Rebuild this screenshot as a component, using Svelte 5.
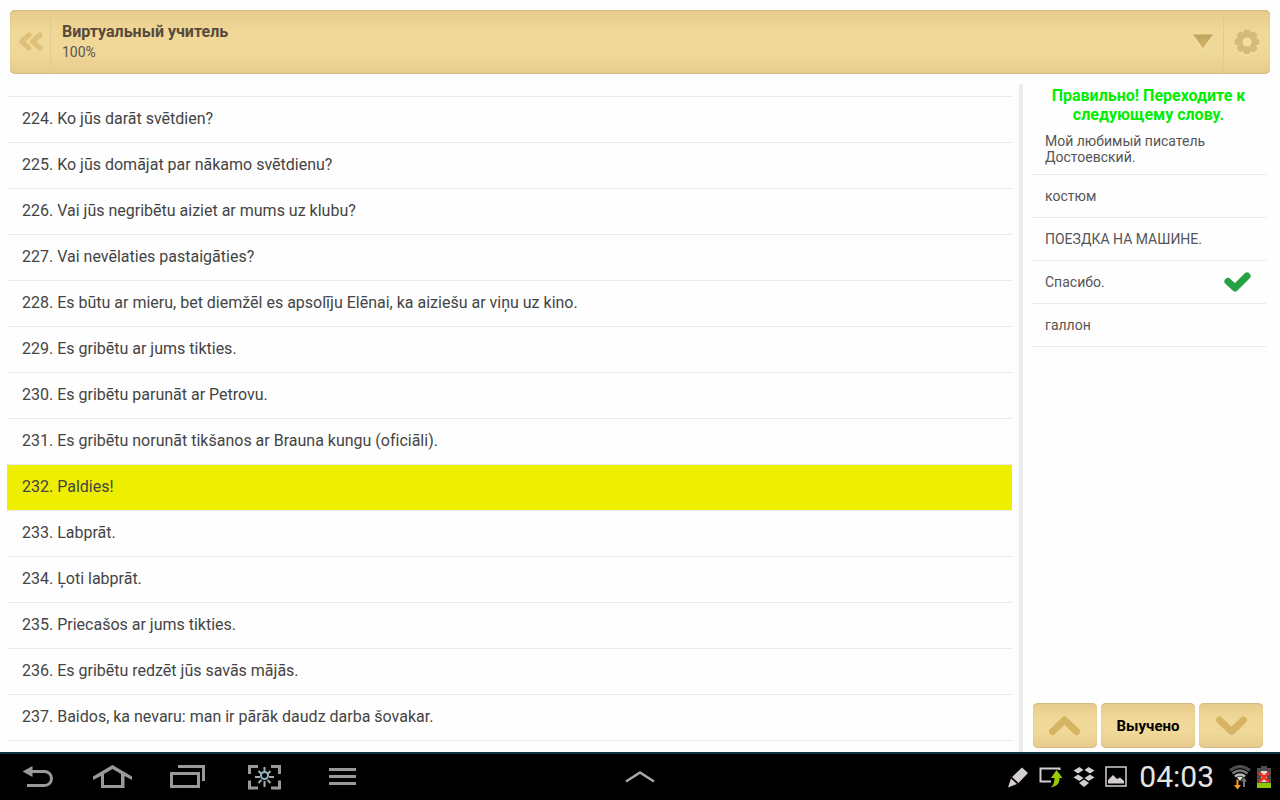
<script>
  const phrases = [
    [224, 'Ko jūs darāt svētdien?'],
    [225, 'Ko jūs domājat par nākamo svētdienu?'],
    [226, 'Vai jūs negribētu aiziet ar mums uz klubu?'],
    [227, 'Vai nevēlaties pastaigāties?'],
    [228, 'Es būtu ar mieru, bet diemžēl es apsolīju Elēnai, ka aiziešu ar viņu uz kino.'],
    [229, 'Es gribētu ar jums tikties.'],
    [230, 'Es gribētu parunāt ar Petrovu.'],
    [231, 'Es gribētu norunāt tikšanos ar Brauna kungu (oficiāli).'],
    [232, 'Paldies!'],
    [233, 'Labprāt.'],
    [234, 'Ļoti labprāt.'],
    [235, 'Priecašos ar jums tikties.'],
    [236, 'Es gribētu redzēt jūs savās mājās.'],
    [237, 'Baidos, ka nevaru: man ir pārāk daudz darba šovakar.']
  ];
  const answers = [
    'Мой любимый писатель Достоевский.',
    'костюм',
    'ПОЕЗДКА НА МАШИНЕ.',
    'Спасибо.',
    'галлон'
  ];
  const correct = 3;
  const petals = [0, 45, 90, 135, 180, 225, 270, 315];
  let current = $state(232);
</script>

<div class="screen">
  <header class="gold">
    <button class="back" aria-label="Назад">
      <svg width="26" height="22" viewBox="0 0 26 22" fill="none" stroke-width="5" stroke-linecap="round" stroke-linejoin="round">
        <path d="M12 4 4.500 10.500 12 17M23 4 15.500 10.500 23 17" stroke="#dfc078" />
      </svg>
    </button>
    <div class="title">
      <h1>Виртуальный учитель</h1>
      <p>100%</p>
    </div>
    <button class="drop" aria-label="Выбрать урок">
      <svg width="22" height="18" viewBox="0 0 22 18">
        <defs>
          <linearGradient id="tri" x1="0" y1="0" x2="0" y2="1">
            <stop offset="0" stop-color="#c2a35c" />
            <stop offset="1" stop-color="#d3b56c" />
          </linearGradient>
        </defs>
        <path d="M1 3h20L11 17.500z" fill="#f7e3b0" />
        <path d="M1 1.500h20L11 15.500z" fill="url(#tri)" />
      </svg>
    </button>
    <button class="gear" aria-label="Настройки">
      <svg width="28" height="28" viewBox="-14 -14 28 28">
        <g fill="#f7e3b0" transform="translate(0 1)">
          {#each petals as a}<circle cx="0" cy="-9" r="3.800" transform="rotate({a})" />{/each}
        </g>
        <g fill="#d8ba78">
          {#each petals as a}<circle cx="0" cy="-8.800" r="3.800" transform="rotate({a})" />{/each}
          <circle r="9" />
        </g>
        <circle r="4.500" fill="#f3dda2" />
      </svg>
    </button>
  </header>

  <main>
    <ol class="phrases">
      {#each phrases as [n, text]}
        <li class:active={n === current}>
          <button onclick={() => (current = n)}>{n}. {text}</button>
        </li>
      {/each}
    </ol>

    <aside>
      <p class="verdict">Правильно! Переходите к следующему слову.</p>
      <ul class="answers">
        {#each answers as answer, i}
          <li>
            <button>
              <span>{answer}</span>
              {#if i === correct}
                <svg width="28" height="22" viewBox="0 0 28 22" fill="none" stroke="#27a243" stroke-width="7" stroke-linecap="round" stroke-linejoin="round">
                  <path d="M4 10.500 11 17 23 5" />
                </svg>
              {/if}
            </button>
          </li>
        {/each}
      </ul>
      <div class="actions">
        <button class="gold" aria-label="Предыдущее слово">
          <svg width="34" height="22" viewBox="0 0 34 22" fill="none" stroke="#d6b463" stroke-width="7" stroke-linecap="round" stroke-linejoin="round">
            <path d="M4.500 16.500 16.500 5 28.500 16.500" />
          </svg>
        </button>
        <button class="gold learned">Выучено</button>
        <button class="gold" aria-label="Следующее слово">
          <svg width="34" height="22" viewBox="0 0 34 22" fill="none" stroke="#d6b463" stroke-width="7" stroke-linecap="round" stroke-linejoin="round">
            <path d="M5.500 5 17.500 16.500 29.500 5" />
          </svg>
        </button>
      </div>
    </aside>
  </main>

  <nav>
    <div class="keys">
      <button aria-label="Назад">
        <svg width="33" height="24" viewBox="0 0 33 24">
          <path d="M8 6.500h14.500a7 7 0 0 1 0 14H5" fill="none" stroke="#999" stroke-width="3" />
          <path d="M.5 6.500 10.500 1v11z" fill="#999" />
        </svg>
      </button>
      <button aria-label="Домой">
        <svg width="39" height="24" viewBox="0 0 39 24">
          <path d="M0 11.500 19.500 0 39 11.500V15L31.500 11v12H8V11L0 15zM11 9v11h17V9l-8.500-5z" fill="#999" fill-rule="evenodd" />
        </svg>
      </button>
      <button aria-label="Недавние">
        <svg width="35" height="24" viewBox="0 0 35 24" fill="none" stroke="#999" stroke-width="3">
          <path d="M1.500 8.500h27v13h-27zM8 1.500h25.500V16" />
        </svg>
      </button>
      <button aria-label="Снимок экрана">
        <svg width="43" height="26" viewBox="0 0 43 26" fill="none">
          <path d="M6.500 10V2.500H15M28 2.500h8.500V10M36.500 16.500V24H28M15 24H6.500v-7.500" stroke="#999" stroke-width="3" />
          <path d="M21.500 3v4M21.500 17v6M12 13h5M26 13h5M15.500 7l3 3M27.500 7l-3 3M15.500 19l3-3M27.500 19l-3-3" stroke="#aaa" stroke-width="2" />
          <circle cx="21.500" cy="11.500" r="3.500" stroke="#8fb6c4" stroke-width="2" fill="#000" />
        </svg>
      </button>
      <button aria-label="Меню">
        <svg width="37" height="24" viewBox="0 0 37 24" fill="#999">
          <path d="M5 3h27v3H5zM5 10h27v3H5zM5 17h27v3H5z" />
        </svg>
      </button>
    </div>

    <button aria-label="Развернуть">
      <svg width="32" height="16" viewBox="0 0 32 16" fill="none" stroke="#aaa" stroke-width="2.500">
        <path d="M2 12.500 16 3.500 30 12.500" />
      </svg>
    </button>

    <div class="status">
      <svg width="22" height="22" viewBox="0 0 22 22" fill="#d2ced2">
        <path d="M15 1.500 21 7 11.500 17 5 11zM4 12.500 10 18 1 21.500z" />
      </svg>
      <svg width="24" height="24" viewBox="0 0 24 24">
        <path d="M20.500 5V3.500H1.500v13H12" fill="none" stroke="#d2ced2" stroke-width="2" />
        <path d="M17.500 5 23.500 13H20.500C20.500 18.500 18 21.500 11.500 22.500c3-2 4-5 4-9.500h-3.500z" fill="#99cc00" />
      </svg>
      <svg width="22" height="22" viewBox="0 0 22 22" fill="#d2ced2">
        <path d="M6.500 1 10.500 4 5 7.500 .5 4.500zM15.500 1 21.500 4.500 17 7.500 11.500 4zM11 5l4.500 3.500L11 12 6.500 8.500z" fill-opacity="0" />
        <path d="M6.500 1 10.500 4 5 7.500 .5 4.500zM15.500 1 21.500 4.500 17 7.500 11.500 4zM.5 11.500 5 8.500 10.500 12 6.500 15zM21.500 11.500 17 8.500 11.500 12 15.500 15zM11 13.500l5 3.500-5 4-5-4z" />
      </svg>
      <svg width="22" height="22" viewBox="0 0 22 22">
        <path d="M1 1h20v19H1z" fill="none" stroke="#d2ced2" stroke-width="1.500" />
        <path d="M3 17.500V14l5-5 4 4 3-1.500 4 3.500v2.500z" fill="#d2ced2" />
      </svg>
      <time>04:03</time>
      <div class="signal">
        <svg width="22" height="26" viewBox="0 0 22 26" fill="none">
          <path d="M1 6.500q10-8 20 0" stroke="#4c4c4c" stroke-width="3" />
          <path d="M3.500 9.500q7.500-6 15 0" stroke="#777" stroke-width="2.500" />
          <path d="M6 12.500q5-4 10 0" stroke="#bbb" stroke-width="2.500" />
          <path d="M11 17 8 13.500q3-2 6 0z" fill="#ddd" />
          <path d="M7.500 15.500h2V21h2.500l-3.500 4.500L5 21h2.500z" fill="#ff9a22" />
          <path d="M14 23v-5.500h-2l3-4 3 4h-2V23z" fill="#777" />
        </svg>
        <svg width="14" height="22" viewBox="0 0 14 22">
          <path d="M4 0h6v2h4v20H0V2h4z" fill="#4c4c4c" />
          <path d="M4 5h6v11H4z" fill="#ddd" />
          <path d="M0 17h14v5H0z" fill="#8fc800" />
          <path d="M2 6.500 12 16M12 6.500 2 16" stroke="#f0301c" stroke-width="3" />
        </svg>
      </div>
    </div>
  </nav>
</div>

<style>
  :global(body) {
    margin: 0;
    background: #fefefe;
  }
  .screen {
    display: flex;
    flex-direction: column;
    height: 100vh;
    font-family: Roboto, "Noto Sans", sans-serif;
    font-variant-ligatures: none;
    color: #444;
  }
  button {
    display: flex;
    align-items: center;
    justify-content: center;
    margin: 0;
    padding: 0;
    border: 0;
    background: none;
    font: inherit;
    color: inherit;
    cursor: pointer;
  }
  svg {
    display: block;
    flex: none;
  }
  .gold {
    border-radius: 5px;
    background: linear-gradient(#e7cb8c, #f0d898 35%, #f0d898 65%, #e6cc8e);
    box-shadow: inset 0 1px 1px #d3b982, inset 0 -1px 1px #d3b982;
  }
  header {
    display: flex;
    flex: none;
    height: 64px;
    margin: 10px;
  }
  .back {
    width: 41px;
    border-right: 1px solid #e3ca8c;
  }
  .title {
    flex: 1;
    padding: 12px 11px;
  }
  h1,
  p {
    margin: 0;
  }
  h1 {
    font-size: 16px;
    line-height: 20px;
    font-weight: 700;
    color: #574a3c;
  }
  .title p {
    font-size: 14px;
    line-height: 20px;
    color: #5a5550;
  }
  .drop {
    width: 40px;
  }
  .gear {
    width: 47px;
    border-left: 1px solid #e3ca8c;
  }
  main {
    display: flex;
    flex: 1;
    min-height: 0;
  }
  ol,
  ul {
    margin: 0;
    padding: 0;
    list-style: none;
  }
  .phrases {
    flex: 1;
    min-width: 0;
    padding: 12px 7px 0;
    overflow: hidden;
  }
  .phrases li {
    border-bottom: 1px solid #e9e9e9;
  }
  .phrases li:first-child {
    border-top: 1px solid #e9e9e9;
  }
  .phrases button {
    justify-content: flex-start;
    width: 100%;
    min-height: 45px;
    padding: 0 15px 2px;
    font-size: 16px;
    line-height: 20px;
    text-align: left;
  }
  .active {
    background: #eeee00;
  }
  aside {
    display: flex;
    flex-direction: column;
    box-sizing: border-box;
    width: 261px;
    padding: 2px 14px 4px 8px;
    border-left: 4px solid #ebebeb;
  }
  .verdict {
    padding: 0 8px;
    font-size: 16px;
    line-height: 19px;
    font-weight: 700;
    text-align: center;
    color: #00ee00;
  }
  .answers {
    flex: 1;
  }
  .answers li {
    border-bottom: 1px solid #e9e9e9;
  }
  .answers button {
    justify-content: space-between;
    width: 100%;
    min-height: 42px;
    padding: 0 14px;
    font-size: 14px;
    line-height: 16px;
    text-align: left;
    color: #555;
  }
  .answers li:first-child button {
    min-height: 50px;
  }
  .actions {
    display: flex;
    gap: 4px;
    padding: 0 3px 0 2px;
  }
  .actions button {
    width: 64px;
    height: 45px;
  }
  .actions .learned {
    flex: 1;
    font-size: 15px;
    font-weight: 700;
    color: #000;
  }
  nav {
    display: grid;
    grid-template-columns: 1fr auto 1fr;
    align-items: center;
    box-sizing: border-box;
    height: 48px;
    border-top: 2px solid #0a3342;
    background: #000;
  }
  .keys {
    display: flex;
    align-items: center;
    gap: 38px;
    padding-left: 22px;
  }
  .status {
    display: flex;
    align-items: center;
    justify-content: flex-end;
    gap: 10px;
    padding-right: 9px;
  }
  time {
    padding: 0 5px 0 2px;
    font-size: 30px;
    line-height: 36px;
    color: #e4e4e4;
  }
  .signal {
    display: flex;
    align-items: center;
    gap: 6px;
  }
</style>
